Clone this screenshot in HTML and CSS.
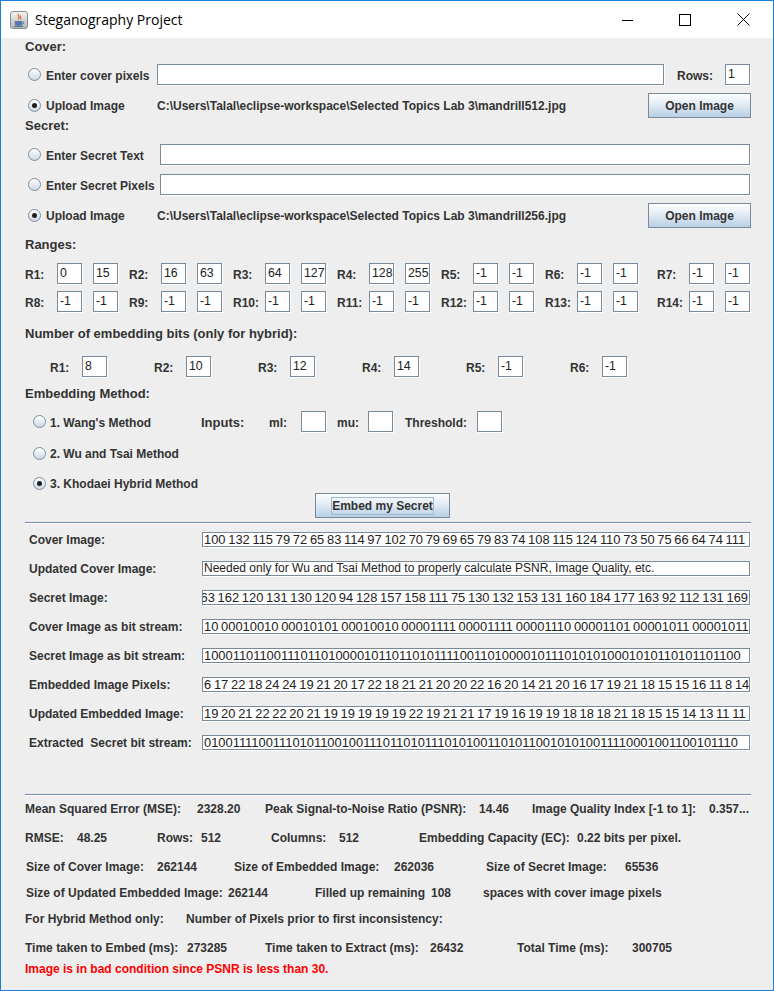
FILE: index.html
```html
<!DOCTYPE html>
<html>
<head>
<meta charset="utf-8">
<title>Steganography Project</title>
<link rel="stylesheet" href="styles.css">
</head>
<body>
<div class="window">
  <div class="titlebar">
    <svg class="app-icon" viewBox="0 0 18 18" width="18" height="18">
      <defs>
        <linearGradient id="ig" x1="0" y1="0" x2="0" y2="1">
          <stop offset="0" stop-color="#f6f6f6"/>
          <stop offset="1" stop-color="#b4b4b4"/>
        </linearGradient>
      </defs>
      <rect x="0.5" y="0.5" width="17" height="17" rx="2.5" fill="url(#ig)" stroke="#8c8c8c"/>
      <path d="M8.6 2.8 C6.8 4.8 10.6 6 8.4 8.8" stroke="#e5762a" fill="none" stroke-width="1.4"/>
      <path d="M10.6 4.4 C9.6 5.8 11.6 6.8 10.4 8.4" stroke="#e0392b" fill="none" stroke-width="1"/>
      <path d="M4.8 10 h7.4 v2.2 a3 2.2 0 0 1 -3 2.2 h-1.4 a3 2.2 0 0 1 -3 -2.2 z" fill="#5578a8"/>
      <path d="M12.2 10.6 a1.6 1.2 0 0 1 0 2.4" stroke="#5578a8" fill="none" stroke-width="1"/>
      <ellipse cx="8.5" cy="15.2" rx="4.8" ry="0.9" fill="#5578a8"/>
    </svg>
    <span class="title">Steganography Project</span>
    <div class="caption">
      <div class="cap-btn">
        <svg width="12" height="12" viewBox="0 0 12 12"><path d="M1 6.5 H12" stroke="#000" stroke-width="1"/></svg>
      </div>
      <div class="cap-btn">
        <svg width="12" height="12" viewBox="0 0 12 12"><rect x="0.5" y="0.5" width="11" height="11" fill="none" stroke="#000" stroke-width="1"/></svg>
      </div>
      <div class="cap-btn">
        <svg width="13" height="13" viewBox="0 0 13 13"><path d="M0.5 0.5 L12.5 12.5 M12.5 0.5 L0.5 12.5" stroke="#000" stroke-width="1"/></svg>
      </div>
    </div>
  </div>

  <div class="content">
    <div class="heading">Cover:</div>

    <div class="cover-row">
      <span class="radio-label"><span class="radio"></span><span class="lbl">Enter cover pixels</span></span>
      <div class="field"></div>
      <span class="lbl rows-lbl">Rows:</span>
      <div class="field">1</div>
    </div>

    <div class="upload-row">
      <span class="radio-label"><span class="radio on"></span><span>Upload Image</span></span>
      <span class="path">C:\Users\Talal\eclipse-workspace\Selected Topics Lab 3\mandrill512.jpg</span>
      <div class="btn">Open Image</div>
    </div>

    <div class="heading heading-secret">Secret:</div>

    <div class="secret-row secret-text">
      <span class="radio-label"><span class="radio"></span><span class="lbl">Enter Secret Text</span></span>
      <div class="field"></div>
    </div>

    <div class="secret-row secret-pixels">
      <span class="radio-label"><span class="radio"></span><span class="lbl">Enter Secret Pixels</span></span>
      <div class="field"></div>
    </div>

    <div class="upload-row">
      <span class="radio-label"><span class="radio on"></span><span>Upload Image</span></span>
      <span class="path">C:\Users\Talal\eclipse-workspace\Selected Topics Lab 3\mandrill256.jpg</span>
      <div class="btn">Open Image</div>
    </div>

    <div class="heading heading-ranges">Ranges:</div>

    <div class="range-row range-first">
      <div class="rgroup"><span class="lbl">R1:</span><div class="field">0</div><div class="field">15</div></div>
      <div class="rgroup"><span class="lbl">R2:</span><div class="field">16</div><div class="field">63</div></div>
      <div class="rgroup"><span class="lbl">R3:</span><div class="field">64</div><div class="field">127</div></div>
      <div class="rgroup"><span class="lbl">R4:</span><div class="field">128</div><div class="field">255</div></div>
      <div class="rgroup"><span class="lbl">R5:</span><div class="field">-1</div><div class="field">-1</div></div>
      <div class="rgroup"><span class="lbl">R6:</span><div class="field">-1</div><div class="field">-1</div></div>
      <div class="rgroup last"><span class="lbl">R7:</span><div class="field">-1</div><div class="field">-1</div></div>
    </div>

    <div class="range-row range-second">
      <div class="rgroup"><span class="lbl">R8:</span><div class="field">-1</div><div class="field">-1</div></div>
      <div class="rgroup"><span class="lbl">R9:</span><div class="field">-1</div><div class="field">-1</div></div>
      <div class="rgroup"><span class="lbl">R10:</span><div class="field">-1</div><div class="field">-1</div></div>
      <div class="rgroup"><span class="lbl">R11:</span><div class="field">-1</div><div class="field">-1</div></div>
      <div class="rgroup"><span class="lbl">R12:</span><div class="field">-1</div><div class="field">-1</div></div>
      <div class="rgroup"><span class="lbl">R13:</span><div class="field">-1</div><div class="field">-1</div></div>
      <div class="rgroup last"><span class="lbl">R14:</span><div class="field">-1</div><div class="field">-1</div></div>
    </div>

    <div class="heading heading-bits">Number of embedding bits (only for hybrid):</div>

    <div class="range-row bits-row">
      <div class="rgroup"><span class="lbl">R1:</span><div class="field">8</div></div>
      <div class="rgroup"><span class="lbl">R2:</span><div class="field">10</div></div>
      <div class="rgroup"><span class="lbl">R3:</span><div class="field">12</div></div>
      <div class="rgroup"><span class="lbl">R4:</span><div class="field">14</div></div>
      <div class="rgroup"><span class="lbl">R5:</span><div class="field">-1</div></div>
      <div class="rgroup"><span class="lbl">R6:</span><div class="field">-1</div></div>
    </div>

    <div class="heading heading-method">Embedding Method:</div>

    <div class="wang-row">
      <span class="radio-label method"><span class="radio"></span><span class="lbl">1. Wang's Method</span></span>
      <span class="inputs-lbl">Inputs:</span>
      <span class="lbl">ml:</span>
      <div class="field"></div>
      <span class="lbl">mu:</span>
      <div class="field"></div>
      <span class="lbl">Threshold:</span>
      <div class="field"></div>
    </div>

    <div class="method-row method-wu">
      <span class="radio-label method"><span class="radio"></span><span class="lbl">2. Wu and Tsai Method</span></span>
    </div>

    <div class="method-row method-hybrid">
      <span class="radio-label method"><span class="radio on"></span><span class="lbl">3. Khodaei Hybrid Method</span></span>
    </div>

    <div class="embed-row">
      <div class="btn embed-btn"><span class="focus">Embed my Secret</span></div>
    </div>

    <div class="sep sep-top"></div>

    <div class="outputs">
      <div class="out-row">
        <span class="lbl">Cover Image:</span>
        <div class="out-field"><span>100 132 115 79 72 65 83 114 97 102 70 79 69 65 79 83 74 108 115 124 110 73 50 75 66 64 74 111</span></div>
      </div>
      <div class="out-row">
        <span class="lbl">Updated Cover Image:</span>
        <div class="out-field prose"><span>Needed only for Wu and Tsai Method to properly calculate PSNR, Image Quality, etc.</span></div>
      </div>
      <div class="out-row">
        <span class="lbl">Secret Image:</span>
        <div class="out-field end"><span>163 162 120 131 130 120 94 128 157 158 111 75 130 132 153 131 160 184 177 163 92 112 131 169</span></div>
      </div>
      <div class="out-row">
        <span class="lbl">Cover Image as bit stream:</span>
        <div class="out-field"><span>10 00010010 00010101 00010010 00001111 00001111 00001110 00001101 00001011 00001011</span></div>
      </div>
      <div class="out-row">
        <span class="lbl">Secret Image as bit stream:</span>
        <div class="out-field"><span>10001101100111011010000101101101011110011010000101110101010001010110101101100</span></div>
      </div>
      <div class="out-row">
        <span class="lbl">Embedded Image Pixels:</span>
        <div class="out-field"><span>6 17 22 18 24 24 19 21 20 17 22 18 21 21 20 20 22 16 20 14 21 20 16 17 19 21 18 15 15 16 11 8 14</span></div>
      </div>
      <div class="out-row">
        <span class="lbl">Updated Embedded Image:</span>
        <div class="out-field"><span>19 20 21 22 22 20 21 19 19 19 19 19 22 19 21 21 17 19 16 19 19 18 18 18 21 18 15 15 14 13 11 11</span></div>
      </div>
      <div class="out-row">
        <span class="lbl">Extracted&nbsp; Secret bit stream:</span>
        <div class="out-field"><span>01001111001110101100100111011010111010100110101100101010011110001001100101110</span></div>
      </div>
    </div>

    <div class="sep sep-bottom"></div>

    <div class="stats">
      <div class="stat-row s1">
        <span>Mean Squared Error (MSE):</span><span>2328.20</span><span>Peak Signal-to-Noise Ratio (PSNR):</span><span>14.46</span><span>Image Quality Index [-1 to 1]:</span><span>0.357...</span>
      </div>
      <div class="stat-row s2">
        <span>RMSE:</span><span>48.25</span><span>Rows:</span><span>512</span><span>Columns:</span><span>512</span><span>Embedding Capacity (EC):</span><span>0.22 bits per pixel.</span>
      </div>
      <div class="stat-row s3">
        <span>Size of Cover Image:</span><span>262144</span><span>Size of Embedded Image:</span><span>262036</span><span>Size of Secret Image:</span><span>65536</span>
      </div>
      <div class="stat-row s4">
        <span>Size of Updated Embedded Image:</span><span>262144</span><span>Filled up remaining</span><span>108</span><span>spaces with cover image pixels</span>
      </div>
      <div class="stat-row s5">
        <span>For Hybrid Method only:</span><span>Number of Pixels prior to first inconsistency:</span>
      </div>
      <div class="stat-row s6">
        <span>Time taken to Embed (ms):</span><span>273285</span><span>Time taken to Extract (ms):</span><span>26432</span><span>Total Time (ms):</span><span>300705</span>
      </div>
      <div class="stat-row s7 warn">
        <span>Image is in bad condition since PSNR is less than 30.</span>
      </div>
    </div>
  </div>
</div>
</body>
</html>
```

FILE: styles.css
```css
* { box-sizing: border-box; }

html, body {
  margin: 0;
  padding: 0;
}

body {
  width: 774px;
  height: 991px;
  background: #ffffff;
  font-family: "Liberation Sans", Arial, sans-serif;
}

.window {
  width: 774px;
  height: 991px;
  border: 1px solid #1c80d6;
  background: #eeeeee;
  display: flex;
  flex-direction: column;
  overflow: hidden;
}

/* ---------- title bar ---------- */
.titlebar {
  height: 37px;
  flex: none;
  background: #ffffff;
  display: flex;
  align-items: center;
  padding-left: 9px;
}

.app-icon {
  flex: none;
  display: block;
}

.title {
  margin-left: 7px;
  font-family: "Open Sans", "Noto Sans", sans-serif;
  font-size: 14px;
  color: #000000;
  padding-bottom: 1px;
}

.caption {
  margin-left: auto;
  margin-right: 1px;
  display: flex;
  height: 37px;
}

.cap-btn {
  width: 58px;
  height: 37px;
  display: flex;
  align-items: center;
  justify-content: center;
}

.cap-btn svg { display: block; }

/* ---------- content ---------- */
.content {
  flex: 1;
  padding: 1px 0 0 24px;
  color: #333333;
  font-size: 12px;
  font-weight: bold;
}

.heading {
  height: 16px;
  line-height: 16px;
  font-size: 13px;
  white-space: nowrap;
}

.heading-secret { margin-top: 0; }
.heading-ranges { margin-top: 9px; }
.heading-bits { margin-top: 14px; }
.heading-method { margin-top: 9px; }

.lbl {
  white-space: nowrap;
  padding-top: 2px;
}

.field {
  height: 21px;
  background: #ffffff;
  border: 1px solid #7a8a99;
  box-shadow: 1px 1px 0 #ffffff;
  font-weight: normal;
  font-size: 12.3px;
  line-height: 19px;
  padding: 0 2px;
  color: #222222;
  white-space: nowrap;
  overflow: hidden;
}

/* radio buttons */
.radio-label {
  display: flex;
  align-items: center;
  white-space: nowrap;
}

.radio {
  width: 13px;
  height: 13px;
  margin-left: 3px;
  margin-right: 5px;
  border-radius: 50%;
  border: 1px solid #7f8e9c;
  background: linear-gradient(#ffffff, #ccd8e4);
  flex: none;
  display: flex;
  align-items: center;
  justify-content: center;
}

.radio.on::after {
  content: "";
  width: 5px;
  height: 5px;
  border-radius: 50%;
  background: #1e1e1e;
}

.radio-label.method .radio {
  margin-left: 8px;
  margin-right: 4px;
}

/* buttons */
.btn {
  height: 25px;
  border: 1px solid #7a8a99;
  background: linear-gradient(#fdfeff 0%, #e6eef6 40%, #b8cfe5 100%);
  color: #333333;
  font-size: 12px;
  font-weight: bold;
  display: flex;
  align-items: center;
  justify-content: center;
  white-space: nowrap;
}

/* cover section */
.cover-row {
  display: grid;
  grid-template-columns: 132px 507px 61px 25px;
  align-items: center;
  height: 21px;
  margin-top: 9px;
}

.rows-lbl { padding-left: 13px; }

.upload-row {
  display: grid;
  grid-template-columns: 132px 491px 103px;
  align-items: center;
  height: 25px;
  margin-top: 8px;
}

.path { white-space: nowrap; }

/* secret section */
.secret-row {
  display: grid;
  grid-template-columns: 135px 590px;
  align-items: center;
  height: 21px;
}

.secret-text { margin-top: 10px; }
.secret-pixels { margin-top: 9px; }

/* ranges */
.range-row {
  display: flex;
  align-items: center;
  height: 21px;
}

.range-first { margin-top: 10px; }
.range-second { margin-top: 7px; }

.rgroup {
  display: flex;
  align-items: center;
  width: 104px;
  flex: none;
}

.rgroup .lbl { width: 32px; }
.rgroup .field { width: 25px; flex: none; }
.rgroup .field + .field { margin-left: 11px; }
.rgroup.last { margin-left: 8px; }

.bits-row {
  margin-top: 14px;
  padding-left: 25px;
}

/* embedding methods */
.wang-row {
  display: grid;
  grid-template-columns: 176px 68px 32px 36px 31px 37px 72px 25px;
  align-items: center;
  height: 21px;
  margin-top: 9px;
}

.wang-row .field { width: 25px; }

.inputs-lbl {
  font-size: 13px;
  padding-top: 1px;
}

.method-row {
  display: flex;
  align-items: center;
  height: 20px;
}

.method-wu { margin-top: 11px; }
.method-hybrid { margin-top: 10px; }

.embed-row {
  display: flex;
  padding-left: 290px;
}

.embed-btn { width: 135px; }

.focus {
  outline: 1px solid #a3b8cc;
  padding: 1px 0;
  line-height: 14px;
}

/* separators */
.sep {
  width: 726px;
  height: 2px;
  border-top: 1px solid #7389b6;
  border-bottom: 1px solid #ffffff;
}

.sep-top { margin-top: 4px; }
.sep-bottom { margin-top: 44px; }

/* output rows */
.outputs {
  margin-top: 8px;
  display: flex;
  flex-direction: column;
  gap: 14px;
}

.out-row {
  display: grid;
  grid-template-columns: 177px 548px;
  align-items: center;
  height: 15px;
}

.out-row .lbl {
  padding-left: 4px;
  padding-top: 1px;
}

.out-field {
  height: 15px;
  background: #ffffff;
  border: 1px solid #7a8a99;
  box-shadow: 1px 1px 0 #ffffff;
  display: flex;
  justify-content: flex-start;
  overflow: hidden;
  white-space: nowrap;
  font-weight: normal;
  font-size: 12.9px;
  word-spacing: -0.85px;
  line-height: 13px;
  padding: 0 0 0 1px;
  color: #222222;
}

.out-field span { flex: none; }
.out-field.end {
  justify-content: flex-end;
  padding-right: 1px;
}
.out-field.prose {
  font-size: 12px;
  word-spacing: 0;
}

/* stats */
.stats { margin-top: 5px; }

.stat-row {
  display: grid;
  align-items: center;
  height: 16px;
  line-height: 16px;
  white-space: nowrap;
}

.s1 { grid-template-columns: 172px 68px 214px 53px 177px auto; }
.s2 { margin-top: 13px; grid-template-columns: 52px 80px 44px 70px 68px 80px 158px auto; }
.s3 { margin-top: 13px; padding-left: 1px; grid-template-columns: 131px 77px 160px 92px 139px auto; }
.s4 { margin-top: 10px; padding-left: 1px; grid-template-columns: 202px 87px 116px 52px auto; }
.s5 { margin-top: 10px; grid-template-columns: 161px auto; }
.s6 { margin-top: 13px; grid-template-columns: 162px 78px 165px 87px 115px auto; }
.s7 { margin-top: 5px; }

.warn { color: #ff0000; }
```
